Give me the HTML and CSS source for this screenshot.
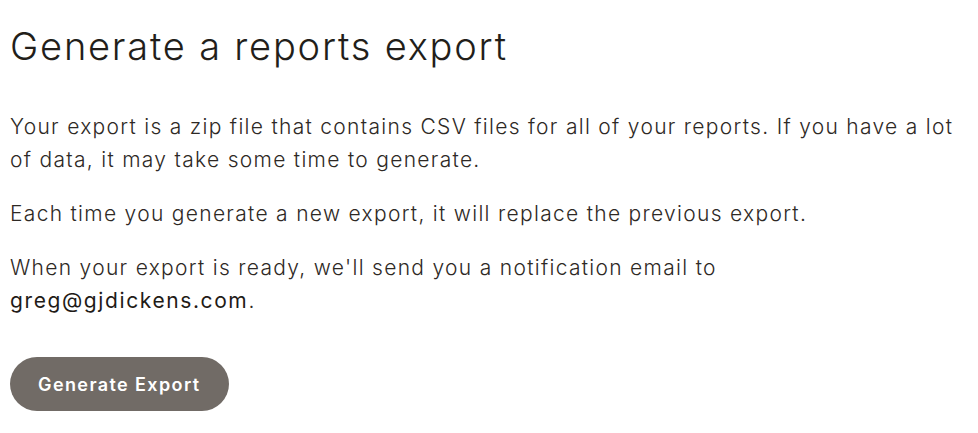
FILE: index.html
```html
<!DOCTYPE html>
<html lang="en">
<head>
<meta charset="utf-8">
<title>Generate a reports export</title>
<link rel="stylesheet" href="styles.css">
</head>
<body>
<main class="export">
  <h1 class="export__title">Generate a reports export</h1>
  <p class="export__text">Your export is a zip file that contains CSV files for all of your reports. If you have a lot of data, it may take some time to generate.</p>
  <p class="export__text">Each time you generate a new export, it will replace the previous export.</p>
  <p class="export__text">When your export is ready, we'll send you a notification email to <span class="export__email">greg@gjdickens.com</span>.</p>
  <button class="export__button" type="button">Generate Export</button>
</main>
</body>
</html>
```
FILE: styles.css
```css
html, body {
  margin: 0;
  background: #ffffff;
}

body {
  font-family: Inter, "Noto Sans", sans-serif;
  color: #2a2520;
}

.export {
  padding: 22px 10px 0 10px;
  width: 952px;
}

.export__title {
  margin: 0 0 40px 0;
  font-size: 38px;
  font-weight: 300;
  line-height: 48px;
  letter-spacing: 1.8px;
  color: #221e1a;
}

.export__text {
  margin: 0 0 21px 0;
  font-size: 21px;
  line-height: 33px;
  font-weight: 300;
  letter-spacing: 1.3px;
  color: #2e2925;
}

.export__email {
  font-weight: 400;
  letter-spacing: 1.6px;
  color: #1f1b17;
}

.export__button {
  margin-top: 19px;
  height: 54px;
  padding: 0 28px;
  border: 0;
  border-radius: 27px;
  background: #716b66;
  color: #ffffff;
  font-family: Inter, "Noto Sans", sans-serif;
  font-size: 18px;
  font-weight: 600;
  letter-spacing: 1.4px;
  cursor: pointer;
}
```
